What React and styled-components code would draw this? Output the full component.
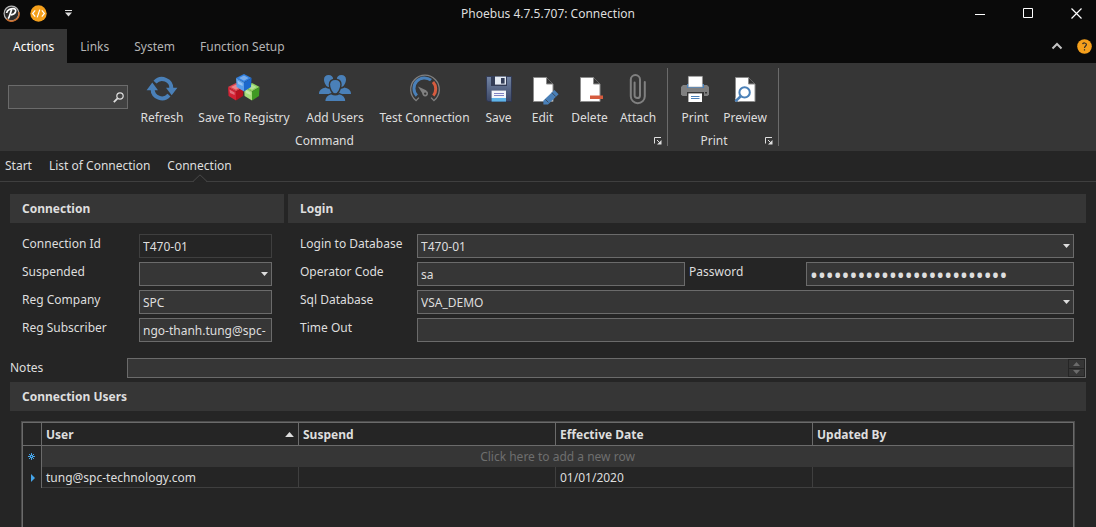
import React from "react";
import styled, { createGlobalStyle } from "styled-components";

const c = {
  black: "#0a0a0a",
  bg: "#252525",
  panel: "#363636",
  line: "#3f3f3f",
  border: "#6b6b6b",
  text: "#dedede",
  blue: "#4a80b8",
  grey: "#808080",
  red: "#d65c3f",
  orange: "#f5a01c",
};

const GlobalStyle = createGlobalStyle`
  * { box-sizing: border-box; }
  body {
    margin: 0;
    background: ${c.bg};
    color: ${c.text};
    font: 12px/18px "Noto Sans", "Open Sans", sans-serif;
  }
  button, input, select, textarea { font: inherit; color: inherit; margin: 0; }
  button { border: 0; padding: 0; background: none; }
  svg { display: block; }
`;

const Window = styled.div`
  display: flex;
  flex-direction: column;
  min-height: 100vh;
`;

const TitleBar = styled.header`
  display: grid;
  grid-template-columns: 1fr auto 1fr;
  height: 29px;
  background: ${c.black};
`;

const QuickAccess = styled.div`
  display: flex;
  align-items: center;
  gap: 10px;
  height: 27px;
  padding: 0 3px;
`;

const Title = styled.h1`
  margin: 0;
  font-size: 12px;
  font-weight: 400;
  line-height: 27px;
`;

const WindowButtons = styled.div`
  display: flex;
  justify-content: flex-end;
  margin-right: -4px;
`;

const WindowButton = styled.button`
  display: grid;
  place-items: center;
  width: 48px;
  height: 27px;
`;

const TabBar = styled.nav`
  display: flex;
  align-items: stretch;
  height: 34px;
  background: ${c.black};
`;

const Tab = styled.button`
  padding: 2px ${(p) => (p.$active ? 13 : 12)}px 0 13px;
  color: ${(p) => (p.$active ? "#ffffff" : "#b4b4b4")};
  background: ${(p) => (p.$active ? c.panel : "transparent")};
`;

const TabTools = styled.div`
  display: flex;
  align-items: center;
  gap: 14px;
  margin-left: auto;
  padding-right: 4px;
`;

const Ribbon = styled.section`
  display: flex;
  height: 88px;
  padding: 5px 0;
  background: ${c.panel};
`;

const RibbonGroup = styled.div`
  display: flex;
  flex-direction: column;
  border-right: 1px solid ${c.border};
`;

const RibbonItems = styled.div`
  display: flex;
  padding-left: ${(p) => p.$indent || 0}px;
  padding-right: 5px;
`;

const SearchBox = styled.label`
  display: flex;
  align-items: center;
  width: 120px;
  height: 24px;
  margin: 17px 6px 0 0;
  padding-right: 3px;
  border: 1px solid ${c.border};
  background: #424242;
`;

const SearchInput = styled.input`
  flex: 1;
  min-width: 0;
  border: 0;
  outline: 0;
  background: none;
`;

const RibbonButton = styled.button`
  display: flex;
  flex-direction: column;
  align-items: center;
  gap: 4px;
  width: ${(p) => p.$width}px;
  padding-top: 5px;
  white-space: nowrap;
`;

const Caption = styled.div`
  display: flex;
  align-items: center;
  margin-top: 5px;
  text-align: center;
`;

const CaptionText = styled.span`
  flex: 1;
`;

const Launcher = styled.button`
  display: grid;
  place-items: center;
  width: 18px;
  height: 18px;
`;

const Breadcrumbs = styled.nav`
  display: flex;
  gap: 17px;
  height: 31px;
  padding: 0 5px;
  border-bottom: 1px solid ${c.line};
`;

const Crumb = styled.a`
  position: relative;
  color: inherit;
  line-height: 30px;
  text-decoration: none;
`;

const Notch = styled.svg`
  position: absolute;
  left: calc(50% - 7px);
  bottom: -1px;
`;

const Content = styled.main`
  display: flex;
  flex: 1;
  flex-direction: column;
  padding: 12px 10px 0;
`;

const Panels = styled.div`
  display: grid;
  grid-template-columns: 274px 1fr;
  gap: 4px;
`;

const PanelTitle = styled.h2`
  margin: 0;
  padding: 1px 12px 0;
  background: ${c.panel};
  font-size: 12px;
  font-weight: 700;
  line-height: 28px;
`;

const Fields = styled.div`
  display: flex;
  flex-direction: column;
  gap: 4px;
  padding: 11px 12px 16px;
`;

const Field = styled.div`
  display: grid;
  grid-template-columns: 117px 1fr;
  align-items: start;
`;

const LoginRow = styled.div`
  display: grid;
  grid-template-columns: 117px 1fr 121px 1fr;
`;

const Label = styled.label`
  line-height: 20px;
  padding-left: ${(p) => p.$indent || 0}px;
`;

const TextInput = styled.input`
  width: 100%;
  min-width: 0;
  height: 24px;
  padding: 0 3px;
  border: 1px solid ${(p) => (p.readOnly ? c.line : c.border)};
  border-radius: 0;
  outline: 0;
  background: ${(p) => (p.readOnly ? c.bg : c.panel)};
`;

const PasswordInput = styled(TextInput)`
  padding-top: 2px;
  font-size: 21px;
`;

const SelectWrap = styled.div`
  position: relative;
`;

const SelectBox = styled.select`
  display: block;
  width: 100%;
  height: 24px;
  padding: 1px 3px 0;
  border: 1px solid ${c.border};
  border-radius: 0;
  outline: 0;
  appearance: none;
  background: ${c.panel};
`;

const SelectArrow = styled.svg`
  position: absolute;
  top: 10px;
  right: 4px;
  pointer-events: none;
`;

const NotesRow = styled.div`
  display: grid;
  grid-template-columns: 117px 1fr;
  margin-bottom: 4px;
`;

const NotesBox = styled.div`
  display: flex;
  height: 20px;
  border: 1px solid ${c.border};
  background: ${c.panel};
`;

const NotesInput = styled.textarea`
  flex: 1;
  height: 18px;
  padding: 0 3px;
  border: 0;
  outline: 0;
  resize: none;
  overflow: hidden;
  background: none;
`;

const Spinner = styled.div`
  display: grid;
  gap: 1px;
  padding: 1px;
  background: ${c.bg};
`;

const SpinButton = styled.button`
  display: grid;
  place-items: center;
  width: 15px;
  background: ${c.panel};
`;

const GridFrame = styled.div`
  flex: 1;
  margin: 10px 11px 0;
  border: 1px solid #4c4c4c;
  border-bottom: 0;
  box-shadow: inset 1px 1px 0 ${c.border}, inset -1px 0 0 ${c.border};
`;

const Table = styled.table`
  width: 100%;
  border-collapse: separate;
  border-spacing: 0;
  table-layout: fixed;
  padding: 1px 1px 0;
`;

const MarkColumn = styled.col`
  width: 19px;
`;

const DataColumn = styled.col`
  width: 257px;
`;

const HeadCell = styled.th`
  height: 23px;
  padding: 1px 4px 0;
  border-right: ${(p) => (p.$last ? 0 : 1)}px solid ${c.border};
  border-bottom: 1px solid ${c.border};
  text-align: left;
  line-height: 21px;
`;

const HeadContent = styled.div`
  display: flex;
  align-items: center;
  justify-content: space-between;
`;

const MarkCell = styled.td`
  padding: 0 5px;
  border-right: 1px solid ${c.border};
`;

const NewRowCell = styled.td`
  height: 21px;
  padding: 1px 0 0;
  background: ${c.panel};
  color: #6e6e6e;
  text-align: center;
  line-height: 20px;
`;

const Cell = styled.td`
  height: 21px;
  padding: 1px 4px 0;
  border-right: ${(p) => (p.$last ? 0 : 1)}px solid ${c.line};
  border-bottom: 1px solid ${c.line};
  line-height: 19px;
`;

const Icon = ({ children }) => (
  <svg width="32" height="32" viewBox="0 0 32 32" aria-hidden="true">{children}</svg>
);

const RefreshIcon = () => (
  <Icon>
    <g fill="none" stroke={c.blue} strokeWidth="4">
      <path d="M9 9.2A9.4 9.4 0 0 1 25.4 16" />
      <path d="M23 22.2A9.4 9.4 0 0 1 6.6 16" />
    </g>
    <path fill={c.blue} d="M0.6 17.2 6.3 9.6 12 17.2ZM20 14.8H31.4L25.7 22.2Z" />
  </Icon>
);

const Cube = ({ x, y, light, mid, dark }) => (
  <g transform={`translate(${x} ${y})`}>
    <path fill={light} d="M0 4 8 0 15.6 4 8 8.4Z" />
    <path fill={mid} d="M0 4 8 8.4V17.6L0.6 13Z" />
    <path fill={dark} d="M15.6 4 8 8.4V17.6L15 13Z" />
    <path fill="#fff" opacity=".35" d="M3 4 8 1.6 12.6 4 8 6.8ZM1.4 6.4 6.6 9.4V12L2 10Z" />
  </g>
);

const CubesIcon = () => (
  <Icon>
    <Cube x={16} y={10} light="#8fd35f" mid="#a6dc7a" dark="#3f9a22" />
    <Cube x={0} y={10} light="#e0454f" mid="#d22335" dark="#b5121f" />
    <Cube x={8} y={1} light="#2f7fe0" mid="#5a9fea" dark="#1c68cc" />
  </Icon>
);

const UsersIcon = () => (
  <Icon>
    <g fill={c.blue}>
      <path d="M5 6.5C5 3.6 6.8 2 9.6 2s4.6 1.6 4.6 4.5S12 14 9.6 14 5 9.4 5 6.5ZM17.8 6.5C17.8 3.6 19.6 2 22.4 2S27 3.6 27 6.5 24.8 14 22.4 14 17.8 9.4 17.8 6.5Z" />
      <path d="M0 21c0-4 3-5.4 6.4-6.4 2 1.4 4.600 1.400 6.600 0V21ZM32 21c0-4-3-5.400-6.400-6.400-2 1.400-4.600 1.400-6.600 0V21Z" />
    </g>
    <g fill={c.blue} stroke={c.panel} strokeWidth="1.400">
      <path d="M5.600 28.800c0-4.600 3-7.400 6.800-8.200 2.400 1.600 5.400 1.600 7.800 0 3.800.8 6.800 3.600 6.800 8.200Z" />
      <path d="M10.400 11.600c0-3.400 2.400-5.400 5.800-5.400s5.800 2 5.800 5.400-2.400 9.400-5.800 9.400-5.800-6-5.800-9.400Z" />
    </g>
  </Icon>
);

const GaugeIcon = () => (
  <Icon>
    <path fill="none" stroke={c.grey} strokeWidth="1.300" d="M10 24.600 7 27.600A14.300 14.300 0 1 1 25 27.600L22 24.600" />
    <path fill="none" stroke={c.blue} strokeWidth="3" d="M7.800 22.600A10.500 10.500 0 0 1 22 7.200" />
    <path fill="none" stroke={c.red} strokeWidth="3" d="M24 9A10.500 10.500 0 0 1 24.400 22.600" />
    <path fill={c.grey} d="M9 13.400 17.600 17.600 14 21.400Z" />
    <circle cx="16.200" cy="20.600" r="2" fill={c.panel} stroke={c.grey} strokeWidth="1.600" />
  </Icon>
);

const SaveIcon = () => (
  <Icon>
    <defs>
      <linearGradient id="disk" x2="0" y2="1">
        <stop stopColor="#7385a5" /><stop offset="1" stopColor="#3c4766" />
      </linearGradient>
    </defs>
    <path fill="url(#disk)" stroke="#2b3450" strokeWidth=".8" d="M3.500 3.500H28.500V28.500H5L3.500 27Z" />
    <path fill="#333d57" d="M8 3H24V13H8Z" />
    <path fill="#e4eaf3" d="M12 3.600H23V11.600H12Z" />
    <path fill="#333d57" d="M18 5H21.600V10.600H18Z" />
    <path fill="#f4f7fb" d="M8.600 17.600H23V25H8.600Z" />
    <path fill="#5fb4e8" d="M8.600 25H23V28.600H8.600Z" />
    <path stroke="#8184c4" d="M11 20.500H21M11 22.500H21" />
  </Icon>
);

const Page = () => (
  <g transform="translate(0 4)">
    <path fill="#fff" stroke="#8c8c8c" d="M6.500.5H19.500L26 7V24.500H6.500Z" />
    <path fill={c.panel} stroke="#8c8c8c" d="M19.500.5V7H26" />
  </g>
);

const EditIcon = () => (
  <Icon>
    <Page />
    <path fill={c.blue} d="M27.400 17 31.600 21.200 21 31.600H16.400V27.400Z" />
    <path stroke={c.panel} strokeWidth=".7" d="M24.800 19.600 28.800 23.600M18.400 26.400 21.400 29.400" />
  </Icon>
);

const DeleteIcon = () => (
  <Icon>
    <Page />
    <path fill={c.red} d="M16 22.500H29V26H16Z" />
  </Icon>
);

const AttachIcon = () => (
  <Icon>
    <path fill="none" stroke={c.grey} strokeWidth="2" strokeLinecap="round" d="M22.800 9V23.200A7 7 0 0 1 8.800 23.200V6.600A4.600 4.600 0 0 1 18 6.600V22.400A2.700 2.700 0 0 1 12.600 22.400V9.400" />
  </Icon>
);

const PrintIcon = () => (
  <Icon>
    <path fill={c.grey} d="M4 12H28L30 14V21.500L28.500 23H3.500L2 21.500V14Z" />
    <path fill={c.blue} d="M8 11H25V15H8Z" />
    <path fill="#fff" stroke="#a0a0a0" strokeWidth=".6" d="M9.400 3.400H23.400V14H9.400Z" />
    <path fill={c.panel} d="M8 19H25V23H8ZM26 19H28V20.400H26Z" />
    <path fill="#fff" d="M9.400 20.400H23V29H9.400Z" />
    <path stroke={c.blue} d="M12 23.500H20.500M12 25.500H20.500" />
  </Icon>
);

const PreviewIcon = () => (
  <Icon>
    <Page />
    <path stroke="#fff" strokeWidth="5" d="M12 23 8 27" />
    <path stroke={c.blue} strokeWidth="2.600" d="M12 23 6.400 28.400" />
    <circle cx="15.600" cy="19.400" r="5.200" fill="#fff" stroke={c.blue} strokeWidth="2" />
  </Icon>
);

const Chevron = ({ up, size = 7, fill = c.text }) => (
  <svg width={size} height={(size + 1) / 2} viewBox="0 0 7 4" aria-hidden="true">
    <path fill={fill} d={up ? "M0 4H7L3.500 0Z" : "M0 0H7L3.500 4Z"} />
  </svg>
);

const LauncherIcon = () => (
  <svg width="8" height="8" viewBox="0 0 8 8" aria-hidden="true">
    <path fill="none" stroke={c.text} d="M.5 6.500V.5H7M3 3 6 6" />
    <path fill={c.text} d="M7.500 3V7.500H3Z" />
  </svg>
);

const commands = [
  ["Refresh", 56, RefreshIcon],
  ["Save To Registry", 108, CubesIcon],
  ["Add Users", 74, UsersIcon],
  ["Test Connection", 105, GaugeIcon],
  ["Save", 43, SaveIcon],
  ["Edit", 45, EditIcon],
  ["Delete", 49, DeleteIcon],
  ["Attach", 48, AttachIcon],
];

const printing = [
  ["Print", 44, PrintIcon],
  ["Preview", 56, PreviewIcon],
];

const Group = ({ caption, indent, items, children }) => (
  <RibbonGroup>
    <RibbonItems $indent={indent}>
      {children}
      {items.map(([label, width, Glyph]) => (
        <RibbonButton key={label} type="button" $width={width}>
          <Glyph />
          {label}
        </RibbonButton>
      ))}
    </RibbonItems>
    <Caption>
      <CaptionText>{caption}</CaptionText>
      <Launcher type="button" aria-label={`${caption} options`}><LauncherIcon /></Launcher>
    </Caption>
  </RibbonGroup>
);

const TextField = ({ id, label, value = "", readOnly }) => (
  <Field>
    <Label htmlFor={id}>{label}</Label>
    <TextInput id={id} defaultValue={value} readOnly={readOnly} />
  </Field>
);

const SelectField = ({ id, label, value = "" }) => (
  <Field>
    <Label htmlFor={id}>{label}</Label>
    <SelectWrap>
      <SelectBox id={id} defaultValue={value}><option>{value}</option></SelectBox>
      <SelectArrow width="7" height="4" viewBox="0 0 7 4" aria-hidden="true">
        <path fill={c.text} d="M0 0H7L3.500 4Z" />
      </SelectArrow>
    </SelectWrap>
  </Field>
);

export default function App() {
  return (
    <>
      <GlobalStyle />
      <Window>
        <TitleBar>
          <QuickAccess>
            <svg width="17" height="17" viewBox="0 0 17 17" aria-hidden="true">
              <circle cx="8.500" cy="8.500" r="7.400" fill="#2c2c2c" stroke="#b9b9b9" strokeWidth="1.200" />
              <path fill="none" stroke="#c96a28" strokeWidth="1.400" d="M15.800 7A7.400 7.400 0 0 1 3.400 14" />
              <path fill="none" stroke="#fff" strokeWidth="1.700" d="M5.200 13.600C6.600 12 7.400 8 8.600 4.600M3.600 8C4 4.600 8 3.400 10.600 3.600 14.200 4 13 9.400 8 9.800" />
            </svg>
            <svg width="17" height="17" viewBox="0 0 17 17" aria-hidden="true">
              <circle cx="8.500" cy="8.500" r="8.200" fill={c.orange} />
              <path fill="none" stroke="#fff" strokeWidth="1.200" d="M5.200 5.400 2.600 8.500 5.200 11.600M11.800 5.400 14.400 8.500 11.800 11.600M9.800 4.600 7.200 12.400" />
            </svg>
            <svg width="23" height="7" viewBox="0 0 23 7" aria-hidden="true">
              <path fill={c.text} d="M8 0H15V1H8ZM8 2.500H15L11.500 6.500Z" />
            </svg>
          </QuickAccess>
          <Title>Phoebus 4.7.5.707: Connection</Title>
          <WindowButtons>
            <WindowButton type="button" aria-label="Minimize">
              <svg width="11" height="11" viewBox="0 0 11 11"><path stroke="#fff" d="M0 6.500H10" /></svg>
            </WindowButton>
            <WindowButton type="button" aria-label="Maximize">
              <svg width="11" height="11" viewBox="0 0 11 11"><path fill="none" stroke="#fff" d="M.5.500H9.500V9.500H.5Z" /></svg>
            </WindowButton>
            <WindowButton type="button" aria-label="Close">
              <svg width="11" height="11" viewBox="0 0 11 11"><path stroke="#fff" strokeWidth="1.200" d="M.5.500 10.500 10.500M10.500.500.5 10.500" /></svg>
            </WindowButton>
          </WindowButtons>
        </TitleBar>

        <TabBar>
          <Tab type="button" $active>Actions</Tab>
          <Tab type="button">Links</Tab>
          <Tab type="button">System</Tab>
          <Tab type="button">Function Setup</Tab>
          <TabTools>
            <button type="button" aria-label="Collapse ribbon">
              <svg width="12" height="8" viewBox="0 0 12 8"><path fill="none" stroke="#c4c4c4" strokeWidth="2" d="M1.500 6.500 6 2 10.500 6.500" /></svg>
            </button>
            <button type="button" aria-label="Help">
              <svg width="15" height="15" viewBox="0 0 15 15">
                <circle cx="7.500" cy="7.500" r="7.300" fill={c.orange} />
                <path fill="none" stroke="#2a2a2a" strokeWidth="1.200" d="M5.600 5.200C6 3.400 9.400 3.600 9.400 5.600 9.400 7 7.500 7 7.500 9M7.500 10.200V11.600" />
              </svg>
            </button>
          </TabTools>
        </TabBar>

        <Ribbon>
          <Group caption="Command" indent={8} items={commands}>
            <SearchBox>
              <SearchInput type="search" aria-label="Search" />
              <svg width="11" height="11" viewBox="0 0 11 11" aria-hidden="true">
                <circle cx="7" cy="4" r="3.200" fill="none" stroke={c.text} strokeWidth="1.200" />
                <path stroke={c.text} strokeWidth="1.800" d="M4.600 6.400.8 10.200" />
              </svg>
            </SearchBox>
          </Group>
          <Group caption="Print" indent={5} items={printing} />
        </Ribbon>

        <Breadcrumbs>
          <Crumb href="#start">Start</Crumb>
          <Crumb href="#list">List of Connection</Crumb>
          <Crumb href="#connection" aria-current="page">
            Connection
            <Notch width="14" height="8" viewBox="0 0 14 8" aria-hidden="true">
              <path stroke={c.bg} d="M1 7.500H13" />
              <path fill={c.bg} stroke="#4a4a4a" d="M0 7.500 7 .8 14 7.500" />
            </Notch>
          </Crumb>
        </Breadcrumbs>

        <Content>
          <Panels>
            <section>
              <PanelTitle>Connection</PanelTitle>
              <Fields>
                <TextField id="connection-id" label="Connection Id" value="T470-01" readOnly />
                <SelectField id="suspended" label="Suspended" />
                <TextField id="reg-company" label="Reg Company" value="SPC" />
                <TextField id="reg-subscriber" label="Reg Subscriber" value="ngo-thanh.tung@spc-" />
              </Fields>
            </section>
            <section>
              <PanelTitle>Login</PanelTitle>
              <Fields>
                <SelectField id="login-database" label="Login to Database" value="T470-01" />
                <LoginRow>
                  <Label htmlFor="operator-code">Operator Code</Label>
                  <TextInput id="operator-code" defaultValue="sa" />
                  <Label htmlFor="password" $indent={4}>Password</Label>
                  <PasswordInput id="password" type="password" defaultValue="phoebus-connection-secret" />
                </LoginRow>
                <SelectField id="sql-database" label="Sql Database" value="VSA_DEMO" />
                <TextField id="time-out" label="Time Out" />
              </Fields>
            </section>
          </Panels>

          <NotesRow>
            <Label htmlFor="notes">Notes</Label>
            <NotesBox>
              <NotesInput id="notes" rows={1} />
              <Spinner>
                <SpinButton type="button" aria-label="Scroll up"><Chevron up fill="#6b6b6b" /></SpinButton>
                <SpinButton type="button" aria-label="Scroll down"><Chevron fill="#6b6b6b" /></SpinButton>
              </Spinner>
            </NotesBox>
          </NotesRow>

          <PanelTitle>Connection Users</PanelTitle>
          <GridFrame>
            <Table>
              <colgroup>
                <MarkColumn />
                <DataColumn />
                <DataColumn />
                <DataColumn />
                <col />
              </colgroup>
              <thead>
                <tr>
                  <HeadCell aria-label="Row state" />
                  <HeadCell scope="col" aria-sort="ascending">
                    <HeadContent>User <Chevron up size={9} /></HeadContent>
                  </HeadCell>
                  <HeadCell scope="col">Suspend</HeadCell>
                  <HeadCell scope="col">Effective Date</HeadCell>
                  <HeadCell scope="col" $last>Updated By</HeadCell>
                </tr>
              </thead>
              <tbody>
                <tr>
                  <MarkCell>
                    <svg width="7" height="7" viewBox="0 0 7 7" aria-hidden="true">
                      <path fill="#45a5ea" d="M3 0H4V7H3ZM0 3H7V4H0ZM1 1H2V2H1ZM5 1H6V2H5ZM1 5H2V6H1ZM5 5H6V6H5ZM2 2H3V3H2ZM4 2H5V3H4ZM2 4H3V5H2ZM4 4H5V5H4Z" />
                      <path fill={c.bg} d="M3 3H4V4H3Z" />
                    </svg>
                  </MarkCell>
                  <NewRowCell colSpan={4}>Click here to add a new row</NewRowCell>
                </tr>
                <tr>
                  <MarkCell>
                    <svg width="8" height="8" viewBox="0 0 8 8" aria-hidden="true">
                      <path fill="#45a5ea" d="M3 0 7 4 3 8Z" />
                    </svg>
                  </MarkCell>
                  <Cell>tung@spc-technology.com</Cell>
                  <Cell />
                  <Cell>01/01/2020</Cell>
                  <Cell $last />
                </tr>
              </tbody>
            </Table>
          </GridFrame>
        </Content>
      </Window>
    </>
  );
}
